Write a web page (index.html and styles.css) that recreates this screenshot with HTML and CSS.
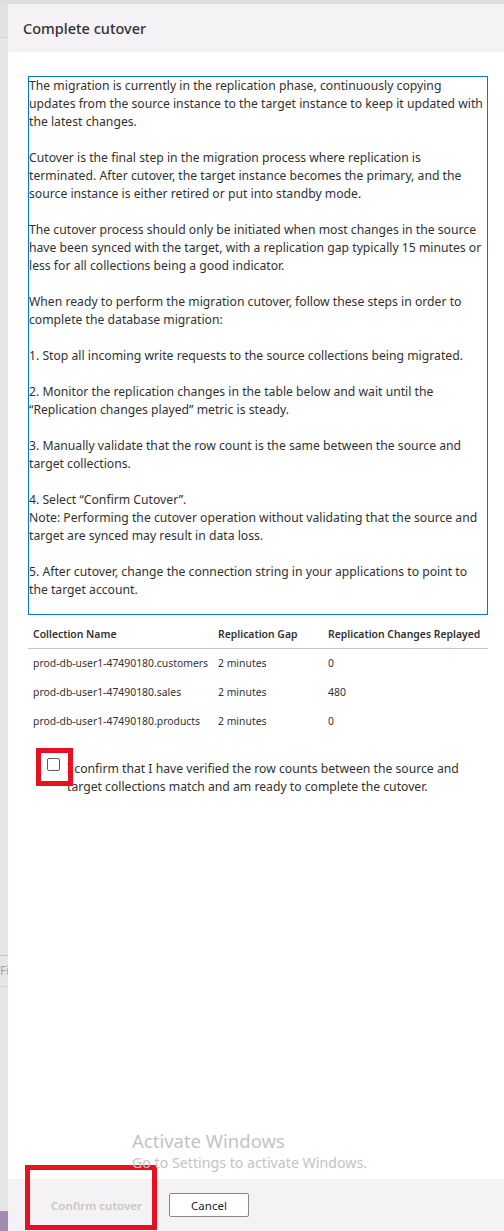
FILE: index.html
```html
<!DOCTYPE html>
<html lang="en">
<head>
<meta charset="utf-8">
<title>Complete cutover</title>
<link rel="stylesheet" href="styles.css">
</head>
<body>
<div class="page">
  <aside class="strip">
    <div class="strip-top"></div>
    <div class="strip-mid"></div>
    <div class="strip-item">Fi</div>
    <div class="strip-rest"></div>
    <div class="strip-accent"></div>
  </aside>
  <section class="panel">
    <header class="panel-header">
      <h1 class="title">Complete cutover</h1>
    </header>
    <div class="panel-body">
      <div class="info-box">
        <p>The migration is currently in the replication phase, continuously copying updates from the source instance to the target instance to keep it updated with the latest changes.</p>
        <p>Cutover is the final step in the migration process where replication is terminated. After cutover, the target instance becomes the primary, and the source instance is either retired or put into standby mode.</p>
        <p>The cutover process should only be initiated when most changes in the source have been synced with the target, with a replication gap typically 15 minutes or less for all collections being a good indicator.</p>
        <p>When ready to perform the migration cutover, follow these steps in order to complete the database migration:</p>
        <p>1. Stop all incoming write requests to the source collections being migrated.</p>
        <p>2. Monitor the replication changes in the table below and wait until the “Replication changes played” metric is steady.</p>
        <p>3. Manually validate that the row count is the same between the source and target collections.</p>
        <p>4. Select “Confirm Cutover”.<br>Note: Performing the cutover operation without validating that the source and target are synced may result in data loss.</p>
        <p>5. After cutover, change the connection string in your applications to point to the target account.</p>
      </div>
      <table class="grid">
        <thead>
          <tr><th class="c1">Collection Name</th><th class="c2">Replication Gap</th><th class="c3">Replication Changes Replayed</th></tr>
        </thead>
        <tbody>
          <tr><td>prod-db-user1-47490180.customers</td><td>2 minutes</td><td>0</td></tr>
          <tr><td>prod-db-user1-47490180.sales</td><td>2 minutes</td><td>480</td></tr>
          <tr><td>prod-db-user1-47490180.products</td><td>2 minutes</td><td>0</td></tr>
        </tbody>
      </table>
      <label class="confirm">
        <span class="check-wrap"><span class="checkbox"></span><span class="mark mark-check"></span></span>
        <span class="confirm-text">I confirm that I have verified the row counts between the source and target collections match and am ready to complete the cutover.</span>
      </label>
    </div>
    <footer class="panel-footer">
      <span class="btn-wrap">
        <button class="btn btn-primary" disabled>Confirm cutover</button>
        <span class="mark mark-btn"></span>
      </span>
      <button class="btn btn-default">Cancel</button>
    </footer>
    <div class="watermark">
      <div class="wm-title">Activate Windows</div>
      <div class="wm-sub">Go to Settings to activate Windows.</div>
    </div>
  </section>
</div>
</body>
</html>
```
FILE: styles.css
```css
* { box-sizing: border-box; }
html, body { margin: 0; padding: 0; }
body {
  background: #dedede;
  font-family: "Segoe UI", "Noto Sans", "Open Sans", sans-serif;
  color: #323130;
  width: 504px;
  height: 1231px;
  overflow: hidden;
}
.page {
  display: flex;
  padding-top: 4px;
  height: 1231px;
}
.strip {
  width: 8px;
  flex: none;
  display: flex;
  flex-direction: column;
  background: #e8e5e8;
}
.strip-top { height: 34px; background: #e1e1e1; border-bottom: 1px solid #d2d2d2; }
.strip-mid { height: 917px; }
.strip-item {
  height: 32px;
  border-top: 1px solid #c8c6c8;
  border-bottom: 1px solid #d6d4d6;
  font-size: 12px;
  line-height: 30px;
  color: #a19f9d;
  overflow: hidden;
  white-space: nowrap;
}
.strip-rest { flex: 1; }
.strip-accent { height: 20px; background: #a28ab0; }

.panel {
  flex: 1;
  display: flex;
  flex-direction: column;
  background: #ffffff;
  position: relative;
}
.panel-header {
  height: 48px;
  background: #f5f2f5;
  display: flex;
  align-items: center;
  padding-left: 15px;
}
.title {
  margin: 0;
  font-size: 14.5px;
  font-weight: 500;
  color: #323130;
}
.panel-body {
  flex: 1;
  padding: 24px 16px 0 20px;
}
.info-box {
  border: 1px solid #0078d4;
  padding: 0 0 15px 0;
  font-size: 12.2px;
  line-height: 18px;
  color: #323130;
}
.info-box p { margin: 0 0 18px; }
.info-box p:last-child { margin-bottom: 0; }

.grid {
  width: 100%;
  border-collapse: collapse;
  margin-top: 5px;
  font-size: 10.4px;
  color: #323130;
}
.grid th {
  text-align: left;
  font-weight: 600;
  height: 28px;
  padding: 0 0 0 5px;
  border-bottom: 1px solid #c8c6c4;
  white-space: nowrap;
}
.grid .c1 { width: 185px; }
.grid .c2 { width: 110px; }
.grid td {
  height: 29px;
  padding: 0 0 0 5px;
  white-space: nowrap;
}
.confirm {
  display: flex;
  align-items: flex-start;
  margin-top: 25px;
  padding-left: 19px;
  font-size: 12.2px;
  line-height: 18px;
}
.check-wrap {
  position: relative;
  flex: none;
  width: 20px;
  height: 18px;
}
.checkbox {
  display: block;
  width: 13px;
  height: 13px;
  margin-top: -2px;
  border: 1px solid #605e5c;
  border-radius: 2px;
  background: #fff;
}
.mark {
  position: absolute;
  border: 5px solid #e81123;
}
.mark-check {
  left: -11px;
  top: -12px;
  width: 37px;
  height: 38px;
}
.panel-footer {
  height: 52px;
  background: #f5f2f5;
  display: flex;
  align-items: center;
  padding-left: 20px;
  gap: 8px;
}
.btn-wrap { position: relative; display: inline-flex; }
.btn {
  font-family: inherit;
  font-size: 11.5px;
  font-weight: 600;
  height: 24px;
  border-radius: 2px;
  padding: 0;
}
.btn-primary {
  width: 133px;
  background: transparent;
  border: 1px solid transparent;
  color: #c8c6c4;
  padding-left: 4px;
}
.mark-btn {
  left: -3px;
  top: -28px;
  width: 132px;
  height: 65px;
}
.btn-default {
  width: 80px;
  background: #fff;
  border: 1px solid #8a8886;
  color: #201f1e;
  font-weight: 400;
}
.watermark {
  position: absolute;
  left: 124px;
  top: 1125px;
  color: #c3c3c3;
  pointer-events: none;
}
.wm-title { font-size: 18.5px; line-height: 24px; }
.wm-sub { font-size: 14.2px; line-height: 20px; }
```
